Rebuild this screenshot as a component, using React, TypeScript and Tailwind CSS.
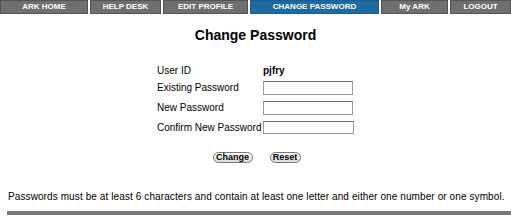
import React from 'react';

const tabs = [
  { label: 'ARK HOME', w: 'w-[88px]' },
  { label: 'HELP DESK', w: 'w-[71px]' },
  { label: 'EDIT PROFILE', w: 'w-[85px]' },
  { label: 'CHANGE PASSWORD', w: 'w-[129px]', active: true },
  { label: 'My ARK', w: 'w-[67px]' },
  { label: 'LOGOUT', w: 'flex-1' },
];

function Field({ label, children }: { label: string; children: React.ReactNode }) {
  return (
    <>
      <div className="flex items-center text-[10px] leading-none text-black whitespace-nowrap">{label}</div>
      <div className="flex items-center">{children}</div>
    </>
  );
}

export default function App() {
  return (
    <div className="w-[511px] h-[217px] bg-white overflow-hidden font-['Liberation_Sans',Arial,sans-serif]">
      <nav className="flex gap-[2px] h-[14px]">
        {tabs.map((t) => (
          <div
            key={t.label}
            className={
              t.w +
              ' flex items-center justify-center text-[8px] font-bold text-white leading-none border ' +
              (t.active ? 'bg-[#1f6aa0] border-[#1a5d8e]' : 'bg-[#6f6f6f] border-[#555555]')
            }
          >
            {t.label}
          </div>
        ))}
      </nav>

      <h1 className="mt-[12px] text-center text-[14px] font-bold leading-[18px] text-black">Change Password</h1>

      <div className="mt-[22px] ml-[157px] grid grid-cols-[106px_auto] gap-y-[6px]">
        <div className="flex items-center text-[10px] leading-none text-black h-[9px]">User ID</div>
        <div className="flex items-center text-[10px] font-bold leading-none h-[9px]">pjfry</div>
        <Field label="Existing Password">
          <input className="w-[90px] h-[14px] border border-[#9a9a9a] border-t-[#6f6f6f] bg-white" />
        </Field>
        <Field label="New Password">
          <input className="w-[90px] h-[14px] border border-[#9a9a9a] border-t-[#6f6f6f] bg-white" />
        </Field>
        <Field label="Confirm New Password">
          <input className="w-[91px] h-[13px] border border-[#9a9a9a] border-t-[#6f6f6f] bg-white" />
        </Field>
      </div>

      <div className="mt-[18px] flex justify-center gap-[17px] pl-[2px]">
        <button className="w-[40px] h-[11px] rounded-full border border-[#777] bg-gradient-to-b from-white to-[#dcdcdc] text-[9px] font-bold leading-none text-black flex items-center justify-center">
          Change
        </button>
        <button className="w-[31px] h-[11px] rounded-full border border-[#777] bg-gradient-to-b from-white to-[#dcdcdc] text-[9px] font-bold leading-none text-black flex items-center justify-center">
          Reset
        </button>
      </div>

      <p className="mt-[29px] ml-[8px] text-[10px] tracking-[0.1px] leading-none text-black whitespace-nowrap">
        Passwords must be at least 6 characters and contain at least one letter and either one number or one symbol.
      </p>

      <div className="mt-[9px] ml-[7px] h-[4px] bg-[#7a7a7a]" />
    </div>
  );
}
